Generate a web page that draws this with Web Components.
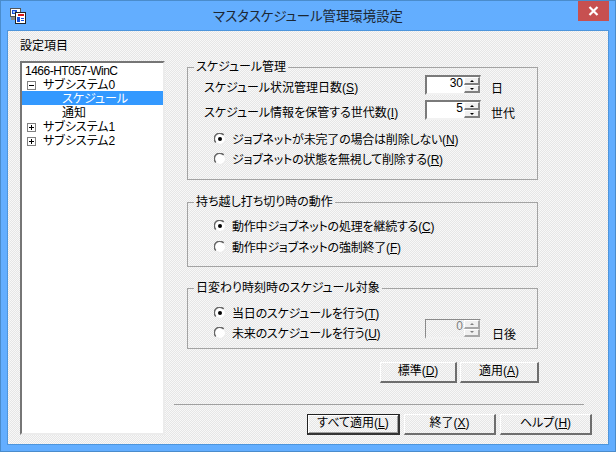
<!DOCTYPE html>
<html lang="ja">
<head>
<meta charset="utf-8">
<title>マスタスケジュール管理環境設定</title>
<style>
html, body { margin: 0; padding: 0; background: #63aeff; }
body { font: 12px/14px "Liberation Sans", "Noto Sans CJK JP", sans-serif; color: #000; font-feature-settings: "palt"; }
</style>
</head>
<body>
<x-window caption="マスタスケジュール管理環境設定">
  <x-settings></x-settings>
</x-window>

<script>
(function() {

function tpl(html) {
    let template = document.createElement('template');
    template.innerHTML = html;
    return template;
}

class Base extends HTMLElement {
    constructor() {
        super();
        this.attachShadow({mode: 'open'});
        this.shadowRoot.appendChild(this.constructor.template.content.cloneNode(true));
    }
}

// Title bar and client frame
class XWindow extends Base {
    static get template() { return tpl(/*html*/`
    <style>
        :host { display: flex; flex-direction: column; box-sizing: border-box; width: 616px; height: 452px; background: #63aeff; border: 1px solid #4a8ccc; padding: 0 6px 6px; }
        .bar { display: grid; grid-template-columns: 1fr auto 1fr; height: 29px; flex: none; }
        .icon { margin: 7px 0 0 3px; display: block; }
        .cap { padding-top: 9px; font-size: 13.4px; color: #1c2733; white-space: nowrap; }
        .close { justify-self: end; width: 31px; height: 20px; background: #c75050; display: flex; align-items: center; justify-content: center; }
        .client { flex: 1; min-height: 0; border: 1px solid #4d95dc; display: flex; }
    </style>
    <div class="bar">
      <svg class="icon" width="16" height="16" viewBox="0 0 16 16" shape-rendering="crispEdges">
        <rect x="0" y="0" width="11" height="9" fill="#555"/>
        <rect x="1" y="1" width="9" height="7" fill="#fff"/>
        <rect x="2" y="2" width="5" height="4" fill="#1c50d8"/>
        <rect x="3" y="3" width="2" height="2" fill="#9cc4ff"/>
        <rect x="1" y="9" width="8" height="3" fill="#888"/>
        <rect x="5" y="4" width="11" height="12" fill="#222"/>
        <rect x="6" y="5" width="9" height="10" fill="#fff"/>
        <rect x="8" y="6" width="6" height="2" fill="#d81818"/>
        <rect x="7" y="9" width="3" height="5" fill="#1450e0"/>
        <rect x="11" y="10" width="3" height="1" fill="#1450e0"/>
        <rect x="11" y="12" width="3" height="1" fill="#1450e0"/>
      </svg>
      <div class="cap"></div>
      <div class="close">
        <svg width="11" height="10" viewBox="0 0 11 10"><path d="M1.5 1l8 8M9.5 1l-8 8" stroke="#fff" stroke-width="2.2" fill="none"/></svg>
      </div>
    </div>
    <div class="client"><slot></slot></div>
    `); }
    connectedCallback() {
        this.shadowRoot.querySelector('.cap').textContent = this.getAttribute('caption');
    }
}

// Sunken tree list
class XTree extends Base {
    static get template() { return tpl(/*html*/`
    <style>
        :host { display: block; box-sizing: border-box; background: #fff; border-style: solid; border-width: 2px; border-color: #767676 #ececec #ececec #767676; }
    </style>
    <slot></slot>
    `); }
}

class XTreeRow extends Base {
    static get template() { return tpl(/*html*/`
    <style>
        :host { display: flex; align-items: flex-start; height: 14px; white-space: nowrap; }
        :host([selected]) { background: #3399ff; color: #fff; }
        :host([level="0"]) { padding-left: 3px; letter-spacing: -.5px; }
        :host([level="1"]) { padding-left: 5px; }
        :host([level="2"]) { padding-left: 40px; }
        #box { display: flex; flex: none; }
        svg { margin: 4px 7px 0 0; }
        .txt { margin-top: 1px; }
    </style>
    <span id="box"></span><span class="txt"><slot></slot></span>
    `); }
    connectedCallback() {
        let state = this.getAttribute('toggle');
        if (!state) return;
        let bar = state === 'plus' ? '<path d="M4.5 2v5"/>' : '';
        this.shadowRoot.getElementById('box').innerHTML =
            `<svg width="9" height="9" viewBox="0 0 9 9" shape-rendering="crispEdges">
              <rect x=".5" y=".5" width="8" height="8" fill="#fff" stroke="#808080"/>
              <g stroke="#000"><path d="M2 4.5h5"/>${bar}</g></svg>`;
    }
}

// Titled frame
class XGroup extends Base {
    static get template() { return tpl(/*html*/`
    <style>
        :host { display: block; width: 351px; margin-left: 13px; }
        fieldset { margin: 0; padding: 0; border: 1px solid #a3a3a3; box-sizing: border-box; min-width: 0; }
        legend { padding: 0 2px; margin-left: 6px; line-height: 14px; }
    </style>
    <fieldset><legend></legend><slot></slot></fieldset>
    `); }
    connectedCallback() {
        this.shadowRoot.querySelector('legend').textContent = this.getAttribute('label');
    }
}

class XRadio extends Base {
    static get template() { return tpl(/*html*/`
    <style>
        :host { display: flex; align-items: center; height: 20px; white-space: nowrap; margin-left: 26px; letter-spacing: -.2px; }
        svg { flex: none; margin-right: 6px; }
        .txt { padding-top: 2px; }
    </style>
    <svg width="12" height="12" viewBox="0 0 12 12">
      <circle cx="6" cy="6" r="5" fill="#fff"/>
      <path d="M1.8 9.5A5.2 5.2 0 0 1 9.7 2" fill="none" stroke="#666" stroke-width="1.5"/>
      <path d="M10.2 2.5A5.2 5.2 0 0 1 2.5 10.2" fill="none" stroke="#eee" stroke-width="1.3"/>
      <circle id="dot" cx="6" cy="6" r="2" fill="#000"/>
    </svg>
    <span class="txt"><slot></slot></span>
    `); }
    connectedCallback() {
        if (!this.hasAttribute('checked')) this.shadowRoot.getElementById('dot').remove();
    }
}

class XSpin extends Base {
    static get template() { return tpl(/*html*/`
    <style>
        :host { display: flex; flex: none; box-sizing: border-box; width: 56px; height: 20px; border-style: solid; border-width: 2px 1px 2px 2px; border-color: #7a7a7a #f2f2f2 #f2f2f2 #7a7a7a; background: #fff; }
        :host([disabled]) { background: transparent; color: #808080; border-width: 1px 1px 2px 1px; border-color: #8a8a8a #f2f2f2 #f2f2f2 #8a8a8a; }
        .val { flex: 1; text-align: right; padding-right: 1px; line-height: 13px; }
        .arrows { flex: none; width: 16px; display: grid; grid-template-rows: 1fr 1fr; background: #f0f0f0; }
        .arrows div { display: flex; align-items: center; justify-content: center; box-sizing: border-box; border-style: solid; border-width: 1px 2px 2px 1px; border-color: #fff #808080 #808080 #fff; }
        i { display: block; width: 0; height: 0; border: 2px solid transparent; }
        .up { border-bottom-color: currentColor; border-top-width: 0; }
        .down { border-top-color: currentColor; border-bottom-width: 0; }
        :host([disabled]) .arrows div { border-color: #fff #a8a8a8 #a8a8a8 #fff; }
    </style>
    <div class="val"><slot></slot></div>
    <div class="arrows"><div><i class="up"></i></div><div><i class="down"></i></div></div>
    `); }
}

class XButton extends Base {
    static get template() { return tpl(/*html*/`
    <style>
        :host { display: flex; align-items: center; justify-content: center; flex: none; box-sizing: border-box; height: 21px; white-space: nowrap; border-style: solid; border-width: 1px 2px 2px 1px; border-color: #fff #6e6e6e #6e6e6e #fff; padding-bottom: 3px; }
        :host([default]) { border-color: #222 #333 #333 #222; box-shadow: inset 1px 1px 0 #fff, inset -1px -1px 0 #a0a0a0; }
    </style>
    <slot></slot>
    `); }
}

// Contents of the dialog
class XSettings extends Base {
    static get template() { return tpl(/*html*/`
    <style>
        :host { flex: 1; min-width: 0; display: grid; grid-template-columns: 145px 418px; column-gap: 9px; padding: 7px 0 10px 12px;
                background: repeating-conic-gradient(#f8f8f8 0 25%, #e6e6e6 0 50%) 0 0 / 2px 2px; }
        .left { display: flex; flex-direction: column; }
        .head { padding-top: 1px; }
        .left x-tree { flex: 1; margin-top: 8px; }
        .right { display: flex; flex-direction: column; padding-top: 22px; }
        .num { display: flex; align-items: flex-start; height: 20px; padding-left: 16px; }
        .num .lab { width: 221px; margin-top: 6px; white-space: nowrap; }
        .num .unit { margin: 7px 0 0 10px; }
        .g1 .body { padding: 1px 0 10px; display: grid; row-gap: 5px; }
        .g1 .radios { margin-top: 4px; }
        .g2 { margin-top: 15px; }
        .g2 .body { padding: 7px 0 9px; display: grid; row-gap: 1px; }
        .g3 { margin-top: 14px; }
        .g3 .body { padding: 8px 0 5px; }
        .split { display: flex; align-items: flex-start; }
        .split x-radio { width: 211px; }
        .split x-spin { margin: -4px 0 0 0; }
        .split .unit { margin: 5px 0 0 11px; }
        .apply { display: flex; gap: 3px; margin: 13px 0 0 206px; }
        hr { width: 410px; margin: 21px 0 0; border: 0; height: 1px; background: #a0a0a0; }
        .foot { display: flex; gap: 4px; margin: 9px 0 0 133px; }
    </style>
    <div class="left">
      <div class="head">設定項目</div>
      <x-tree>
        <x-tree-row level="0">1466-HT057-WinC</x-tree-row>
        <x-tree-row level="1" toggle="minus">サブシステム0</x-tree-row>
        <x-tree-row level="2" selected>スケジュール</x-tree-row>
        <x-tree-row level="2">通知</x-tree-row>
        <x-tree-row level="1" toggle="plus">サブシステム1</x-tree-row>
        <x-tree-row level="1" toggle="plus">サブシステム2</x-tree-row>
      </x-tree>
    </div>
    <div class="right">
      <x-group class="g1" label="スケジュール管理">
        <div class="body">
          <div class="num"><span class="lab">スケジュール状況管理日数(<u>S</u>)</span><x-spin>30</x-spin><span class="unit">日</span></div>
          <div class="num"><span class="lab">スケジュール情報を保管する世代数(<u>I</u>)</span><x-spin>5</x-spin><span class="unit">世代</span></div>
          <div class="radios">
            <x-radio checked>ジョブネットが未完了の場合は削除しない(<u>N</u>)</x-radio>
            <x-radio>ジョブネットの状態を無視して削除する(<u>R</u>)</x-radio>
          </div>
        </div>
      </x-group>
      <x-group class="g2" label="持ち越し打ち切り時の動作">
        <div class="body">
          <x-radio checked>動作中ジョブネットの処理を継続する(<u>C</u>)</x-radio>
          <x-radio>動作中ジョブネットの強制終了(<u>F</u>)</x-radio>
        </div>
      </x-group>
      <x-group class="g3" label="日変わり時刻時のスケジュール対象">
        <div class="body">
          <x-radio checked>当日のスケジュールを行う(<u>T</u>)</x-radio>
          <div class="split">
            <x-radio>未来のスケジュールを行う(<u>U</u>)</x-radio>
            <x-spin disabled>0</x-spin><span class="unit">日後</span>
          </div>
        </div>
      </x-group>
      <div class="apply">
        <x-button style="width:77px">標準(<u>D</u>)</x-button>
        <x-button style="width:79px">適用(<u>A</u>)</x-button>
      </div>
      <hr>
      <div class="foot">
        <x-button default style="width:93px">すべて適用(<u>L</u>)</x-button>
        <x-button style="width:92px">終了(<u>X</u>)</x-button>
        <x-button style="width:92px">ヘルプ(<u>H</u>)</x-button>
      </div>
    </div>
    `); }
}

customElements.define('x-window', XWindow);
customElements.define('x-tree', XTree);
customElements.define('x-tree-row', XTreeRow);
customElements.define('x-group', XGroup);
customElements.define('x-radio', XRadio);
customElements.define('x-spin', XSpin);
customElements.define('x-button', XButton);
customElements.define('x-settings', XSettings);

})();
</script>
</body>
</html>
